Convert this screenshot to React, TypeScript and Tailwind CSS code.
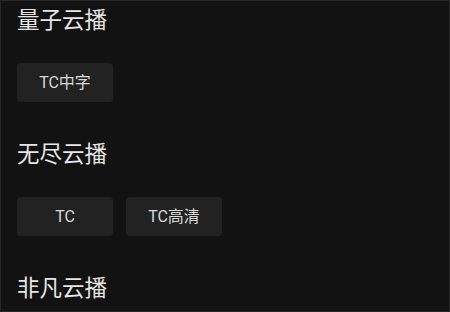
const sections = [
  { title: "量子云播", items: ["TC中字"] },
  { title: "无尽云播", items: ["TC", "TC高清"] },
  { title: "非凡云播", items: [] as string[] },
];

export default function App() {
  return (
    <div
      className="h-[312px] w-[450px] overflow-hidden border border-[#262626] bg-[#121212] px-[16px] pt-[3px]"
      style={{ fontFamily: '"Roboto", "Noto Sans CJK SC", sans-serif' }}
    >
      {sections.map((s) => (
        <div key={s.title} className="mb-[36px]">
          <h2 className="text-[22.5px] leading-[33px] text-[#e6e6e6]">{s.title}</h2>
          {s.items.length > 0 && (
            <div className="mt-[26px] flex gap-[13px]">
              {s.items.map((item) => (
                <button
                  key={item}
                  className="flex h-[39px] w-[96px] items-center justify-center rounded-[4px] bg-[#222222] text-[16px] text-[#d9d9d9]"
                >
                  {item}
                </button>
              ))}
            </div>
          )}
        </div>
      ))}
    </div>
  );
}
